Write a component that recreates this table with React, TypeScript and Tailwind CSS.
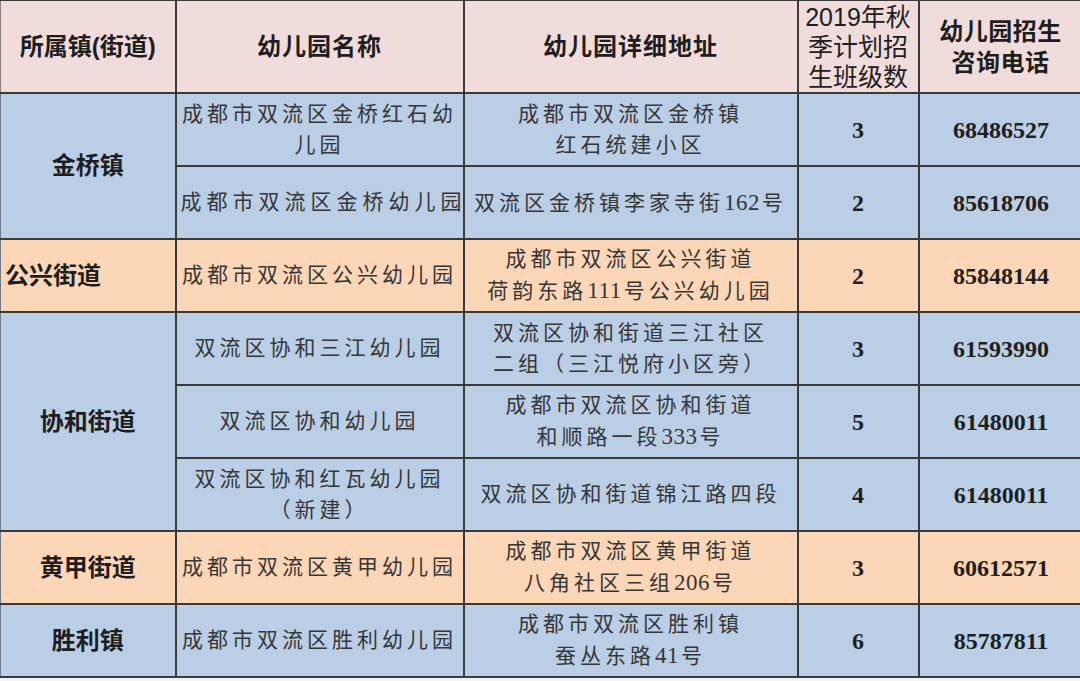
import React from "react";

/**
 * 双流区幼儿园招生信息表
 * Excel-style table: pink header, blue/orange row groups, merged town cells
 */

type Row = {
  name: React.ReactNode;
  addr: React.ReactNode;
  classes: string;
  phone: string;
  nameTrack?: string;
};

type Group = {
  town: string;
  tone: "blue" | "orange";
  alignLeft?: boolean;
  rows: Row[];
};

// digits inside Chinese text sit tight, without the wide CJK tracking
const N = ({ children }: { children: React.ReactNode }) => (
  <span className="text-[23px] tracking-[0.5px] pr-[2px]">{children}</span>
);

const groups: Group[] = [
  {
    town: "金桥镇",
    tone: "blue",
    rows: [
      {
        name: (
          <>
            成都市双流区金桥红石幼
            <br />
            儿园
          </>
        ),
        addr: (
          <>
            成都市双流区金桥镇
            <br />
            红石统建小区
          </>
        ),
        classes: "3",
        phone: "68486527",
      },
      {
        name: "成都市双流区金桥幼儿园",
        addr: (
          <>
            双流区金桥镇李家寺街<N>162</N>号
          </>
        ),
        classes: "2",
        phone: "85618706",
        nameTrack: "tracking-[5px]",
      },
    ],
  },
  {
    town: "公兴街道",
    tone: "orange",
    alignLeft: true,
    rows: [
      {
        name: "成都市双流区公兴幼儿园",
        addr: (
          <>
            成都市双流区公兴街道
            <br />
            荷韵东路<N>111</N>号公兴幼儿园
          </>
        ),
        classes: "2",
        phone: "85848144",
      },
    ],
  },
  {
    town: "协和街道",
    tone: "blue",
    rows: [
      {
        name: "双流区协和三江幼儿园",
        addr: (
          <>
            双流区协和街道三江社区
            <br />
            二组（三江悦府小区旁）
          </>
        ),
        classes: "3",
        phone: "61593990",
      },
      {
        name: "双流区协和幼儿园",
        addr: (
          <>
            成都市双流区协和街道
            <br />
            和顺路一段<N>333</N>号
          </>
        ),
        classes: "5",
        phone: "61480011",
      },
      {
        name: (
          <>
            双流区协和红瓦幼儿园
            <br />
            （新建）
          </>
        ),
        addr: "双流区协和街道锦江路四段",
        classes: "4",
        phone: "61480011",
      },
    ],
  },
  {
    town: "黄甲街道",
    tone: "orange",
    rows: [
      {
        name: "成都市双流区黄甲幼儿园",
        addr: (
          <>
            成都市双流区黄甲街道
            <br />
            八角社区三组<N>206</N>号
          </>
        ),
        classes: "3",
        phone: "60612571",
      },
    ],
  },
  {
    town: "胜利镇",
    tone: "blue",
    rows: [
      {
        name: "成都市双流区胜利幼儿园",
        addr: (
          <>
            成都市双流区胜利镇
            <br />
            蚕丛东路<N>41</N>号
          </>
        ),
        classes: "6",
        phone: "85787811",
      },
    ],
  },
];

const cell = "border-2 border-[#3a3a3a] px-1 text-center align-middle";
const headFont = "font-['Liberation_Sans','Noto_Sans_CJK_SC',sans-serif] font-bold text-[24px] text-[#1e1e1e]";
const bodyFont =
  "font-['Liberation_Serif','Noto_Sans_CJK_SC',serif] text-[21px] leading-[31px] text-[#363636] whitespace-nowrap";
const numFont = "font-['Liberation_Serif',serif] font-bold text-[24px] text-[#1f1f1f]";

export default function App() {
  return (
    <div className="w-[1080px] h-[681px] overflow-hidden bg-[#f3f3f3]">
      <table className="table-fixed border-collapse w-[1082px] -mt-[1px]">
        <colgroup>
          <col className="w-[175px]" />
          <col className="w-[288px]" />
          <col className="w-[334px]" />
          <col className="w-[121px]" />
          <col className="w-[164px]" />
        </colgroup>
        <thead>
          <tr className="h-[93px] bg-[#f1dcdc]">
            <th className={`${cell} ${headFont} border-l-[#8a8080] border-l-[1px]`}>所属镇(街道)</th>
            <th className={`${cell} ${headFont} tracking-[1px]`}>幼儿园名称</th>
            <th className={`${cell} ${headFont} tracking-[1px]`}>幼儿园详细地址</th>
            <th className={`${cell} ${headFont} leading-[30px] font-normal text-[25px]`}>
              2019年秋
              <br />
              季计划招
              <br />
              生班级数
            </th>
            <th className={`${cell} ${headFont} leading-[31px] tracking-[0.5px]`}>
              幼儿园招生
              <br />
              咨询电话
            </th>
          </tr>
        </thead>
        <tbody>
          {groups.map((g) =>
            g.rows.map((r, i) => {
              const bg = g.tone === "blue" ? "bg-[#bacee6]" : "bg-[#fbd6b7]";
              return (
                <tr key={`${g.town}-${i}`} className={`h-[73px] ${bg}`}>
                  {i === 0 && (
                    <td
                      rowSpan={g.rows.length}
                      className={`${cell} ${headFont} border-l-[1px] border-l-[#6f7a88] ${
                        g.alignLeft ? "text-left pl-[4px]" : ""
                      }`}
                    >
                      {g.town}
                    </td>
                  )}
                  <td className={`${cell} ${bodyFont} ${r.nameTrack ?? "tracking-[4px]"}`}>{r.name}</td>
                  <td className={`${cell} ${bodyFont} tracking-[4px]`}>{r.addr}</td>
                  <td className={`${cell} ${numFont}`}>{r.classes}</td>
                  <td className={`${cell} ${numFont} border-r-0`}>{r.phone}</td>
                </tr>
              );
            })
          )}
        </tbody>
      </table>
    </div>
  );
}
